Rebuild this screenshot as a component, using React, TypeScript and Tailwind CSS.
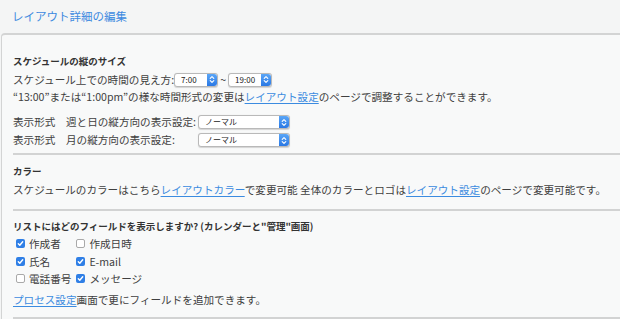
import { FC } from 'react'

const Stepper: FC = () => (
  <span className="flex h-full w-[10px] items-center justify-center rounded-r-[3px] bg-gradient-to-b from-[#5aa6f7] to-[#2a78e4]">
    <svg width="6" height="9" viewBox="0 0 6 9" fill="none" stroke="white" strokeWidth="1.1" strokeLinecap="round" strokeLinejoin="round">
      <path d="M1.2 3.4 3 1.6 4.8 3.4" />
      <path d="M1.2 5.6 3 7.4 4.8 5.6" />
    </svg>
  </span>
)

const Select: FC<{ value: string; width: string }> = ({ value, width }) => (
  <span className={`inline-flex h-[14px] ${width} items-stretch rounded-[3px] border border-[#b9b9b9] bg-white align-middle shadow-[0_0.5px_1px_rgba(0,0,0,0.15)]`}>
    <span className="flex flex-1 items-center pl-[6px] text-[8px] leading-none text-[#222]">{value}</span>
    <Stepper />
  </span>
)

const Checkbox: FC<{ checked?: boolean }> = ({ checked }) =>
  checked ? (
    <span className="flex h-[9px] w-[9px] items-center justify-center rounded-[2px] bg-[#2f7fe6]">
      <svg width="7" height="7" viewBox="0 0 7 7" fill="none" stroke="white" strokeWidth="1.4" strokeLinecap="round" strokeLinejoin="round">
        <path d="M1.3 3.7 2.8 5.2 5.7 1.8" />
      </svg>
    </span>
  ) : (
    <span className="h-[9px] w-[9px] rounded-[2px] border border-[#a9a9a9] bg-white" />
  )

const Field: FC<{ label: string; checked?: boolean; first?: boolean }> = ({ label, checked, first }) => (
  <label className={`flex items-center gap-[4px] ${first ? 'ml-[3px]' : 'ml-[1px]'}`}>
    <Checkbox checked={checked} />
    <span>{label}</span>
  </label>
)

const Link: FC<{ children: string }> = ({ children }) => (
  <a href="#" className="text-[#3b8be0] underline decoration-[#3b8be0] underline-offset-[2px]">
    {children}
  </a>
)

const Divider: FC<{ className?: string }> = ({ className }) => (
  <div className={`h-[2px] bg-[#d2d3d3] ${className ?? ''}`} />
)

export default function App() {
  return (
    <div className="h-screen overflow-hidden bg-[#f4f5f5] font-['Noto_Sans_CJK_JP',sans-serif] text-[10.6px] text-[#404040]">
      <header className="flex h-[33px] items-center px-3">
        <h1 className="text-[11.5px] text-[#3d8ae0]">レイアウト詳細の編集</h1>
      </header>

      <div className="ml-px rounded-tl-[4px] border-t-2 border-l border-[#d3d4d4] bg-[#f8f9f9] pl-[11px]">
        {/* 縦のサイズ */}
        <h2 className="pt-[19px] text-[9.5px] font-bold leading-[14px] text-[#333]">スケジュールの縦のサイズ</h2>
        <div className="mt-[3px] flex h-[17px] items-center whitespace-nowrap">
          <span>スケジュール上での時間の見え方:</span>
          <Select value="7:00" width="w-[44px]" />
          <span className="w-[10px] overflow-hidden text-center">~</span>
          <Select value="19:00" width="w-[44px]" />
        </div>
        <p className="h-[17px] whitespace-nowrap leading-[17px]">
          “13:00”または“1:00pm”の様な時間形式の変更は<Link>レイアウト設定</Link>のページで調整することができます。
        </p>

        <div className="mt-[8px] grid w-fit grid-cols-[max-content_max-content] items-center gap-x-[2px] whitespace-nowrap">
          <span className="leading-[18px]">表示形式　週と日の縦方向の表示設定:</span>
          <Select value="ノーマル" width="w-[92px]" />
          <span className="leading-[18px]">表示形式　月の縦方向の表示設定:</span>
          <Select value="ノーマル" width="w-[92px]" />
        </div>

        <Divider className="mt-[4px]" />

        {/* カラー */}
        <h2 className="mt-[9px] text-[9.5px] font-bold leading-[14px] text-[#333]">カラー</h2>
        <p className="mt-[3px] whitespace-nowrap leading-[17px]">
          スケジュールのカラーはこちら<Link>レイアウトカラー</Link>で変更可能 全体のカラーとロゴは<Link>レイアウト設定</Link>のページで変更可能です。
        </p>

        <Divider className="mt-[11px]" />

        {/* フィールド */}
        <h2 className="mt-[8px] whitespace-nowrap text-[9.5px] font-bold leading-[14px] text-[#333]">
          リストにはどのフィールドを表示しますか? (カレンダーと"管理"画面)
        </h2>
        <div className="mt-[2px] grid w-fit grid-cols-[max-content_max-content] gap-x-[4px] leading-[17.5px]">
          <Field label="作成者" checked first />
          <Field label="作成日時" />
          <Field label="氏名" checked first />
          <Field label="E-mail" checked />
          <Field label="電話番号" first />
          <Field label="メッセージ" checked />
        </div>
        <p className="mt-[3px] whitespace-nowrap leading-[17px]">
          <Link>プロセス設定</Link>画面で更にフィールドを追加できます。
        </p>

        <Divider className="mt-[9px]" />
      </div>
    </div>
  )
}
